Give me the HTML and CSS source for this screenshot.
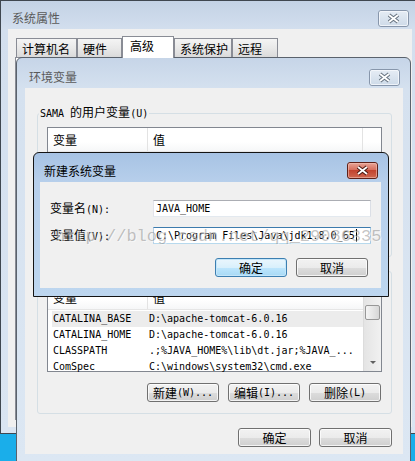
FILE: index.html
```html
<!DOCTYPE html>
<html lang="zh-CN">
<head>
<meta charset="utf-8">
<title>新建系统变量</title>
<link rel="stylesheet" href="styles.css">
</head>
<body>
<div class="desk">

  <section class="win sys">
    <div class="tb">
      <span class="title">系统属性</span>
      <svg class="cls" width="31" height="17" viewBox="0 0 31 17">
        <defs><linearGradient id="gi1" x1="0" y1="0" x2="0" y2="1"><stop offset="0" stop-color="#e6edf5"/><stop offset="1" stop-color="#cddae8"/></linearGradient></defs>
        <rect x=".5" y=".5" width="30" height="16" rx="2.5" fill="url(#gi1)" stroke="#8796ab"/>
        <rect x="1.5" y="1.5" width="28" height="14" rx="1.5" fill="none" stroke="#f6f9fc" stroke-opacity=".8"/>
        <path d="M11 5l9 7M20 5l-9 7" stroke="#66727f" stroke-width="3.8"/>
        <path d="M11 5l9 7M20 5l-9 7" stroke="#fff" stroke-width="1.8"/>
      </svg>
    </div>
    <div class="client sys-client">
      <div class="tabs">
        <div class="tab t1">计算机名</div>
        <div class="tab t2">硬件</div>
        <div class="tab t3 sel">高级</div>
        <div class="tab t4">系统保护</div>
        <div class="tab t5">远程</div>
      </div>
      <div class="panel"></div>
    </div>
  </section>

  <section class="win env">
    <div class="tb">
      <span class="title">环境变量</span>
      <svg class="cls" width="31" height="17" viewBox="0 0 31 17">
        <defs><linearGradient id="gi2" x1="0" y1="0" x2="0" y2="1"><stop offset="0" stop-color="#e6edf5"/><stop offset="1" stop-color="#cddae8"/></linearGradient></defs>
        <rect x=".5" y=".5" width="30" height="16" rx="2.5" fill="url(#gi2)" stroke="#8796ab"/>
        <rect x="1.5" y="1.5" width="28" height="14" rx="1.5" fill="none" stroke="#f6f9fc" stroke-opacity=".8"/>
        <path d="M11 5l9 7M20 5l-9 7" stroke="#66727f" stroke-width="3.8"/>
        <path d="M11 5l9 7M20 5l-9 7" stroke="#fff" stroke-width="1.8"/>
      </svg>
    </div>
    <div class="client env-client">
      <fieldset class="grp">
        <legend><span class="m">SAMA </span>的用户变量<span class="m">(U)</span></legend>
        <div class="lv lv-user">
          <div class="hdr hdr3">
            <div class="hc">变量</div>
            <div class="hc">值</div>
            <div class="hc"></div>
          </div>
        </div>
        <div class="gbtns">
          <div class="btn">新建<span class="m">(N)...</span></div>
          <div class="btn">编辑<span class="m">(E)...</span></div>
          <div class="btn">删除<span class="m">(D)</span></div>
        </div>
      </fieldset>
      <fieldset class="grp grp-sys">
        <legend>系统变量<span class="m">(S)</span></legend>
        <div class="lv lv-sys">
          <div class="lvmain">
            <div class="hdr hdr2">
              <div class="hc">变量</div>
              <div class="hc">值</div>
            </div>
            <div class="rows">
              <div class="row hl m"><span>CATALINA_BASE</span><span>D:\apache-tomcat-6.0.16</span></div>
              <div class="row m"><span>CATALINA_HOME</span><span>D:\apache-tomcat-6.0.16</span></div>
              <div class="row m"><span>CLASSPATH</span><span>.;%JAVA_HOME%\lib\dt.jar;%JAVA_...</span></div>
              <div class="row m"><span>ComSpec</span><span>C:\windows\system32\cmd.exe</span></div>
            </div>
          </div>
          <div class="vsb">
            <div class="arr up"><i></i></div>
            <div class="thumb"></div>
            <div class="track"></div>
            <div class="arr dn"><i></i></div>
          </div>
        </div>
        <div class="gbtns">
          <div class="btn">新建<span class="m">(W)...</span></div>
          <div class="btn">编辑<span class="m">(I)...</span></div>
          <div class="btn">删除<span class="m">(L)</span></div>
        </div>
      </fieldset>
      <div class="dbtns">
        <div class="btn wide">确定</div>
        <div class="btn wide">取消</div>
      </div>
    </div>
  </section>

  <section class="win new">
    <div class="tb">
      <span class="title">新建系统变量</span>
      <svg class="cls" width="31" height="17" viewBox="0 0 31 17">
        <defs><linearGradient id="gr1" x1="0" y1="0" x2="0" y2="1"><stop offset="0" stop-color="#eaa89a"/><stop offset=".45" stop-color="#d7705e"/><stop offset=".5" stop-color="#c2432f"/><stop offset="1" stop-color="#d06a52"/></linearGradient></defs>
        <rect x=".5" y=".5" width="30" height="16" rx="2.5" fill="url(#gr1)" stroke="#5e2119"/>
        <rect x="1.5" y="1.5" width="28" height="14" rx="1.5" fill="none" stroke="#f2c0b4" stroke-opacity=".6"/>
        <path d="M11 5l9 7M20 5l-9 7" stroke="#4a1810" stroke-width="3.8"/>
        <path d="M11 5l9 7M20 5l-9 7" stroke="#fff" stroke-width="1.8"/>
      </svg>
    </div>
    <div class="client nclient">
      <div class="frow">
        <label>变量名<span class="m">(N):</span></label>
        <div class="inp m">JAVA_HOME</div>
      </div>
      <div class="frow">
        <label>变量值<span class="m">(V):</span></label>
        <div class="inp focus m">C:\Program Files\Java\jdk1.8.0_65<span class="caret"></span></div>
      </div>
      <div class="nbtns">
        <div class="btn def">确定</div>
        <div class="btn">取消</div>
      </div>
    </div>
  </section>

  <div class="wm">http://blog.csdn.net/qq_29086335</div>
</div>
</body>
</html>
```

FILE: styles.css
```css
* { box-sizing: border-box; margin: 0; padding: 0; }
html, body { width: 415px; height: 461px; overflow: hidden; }
body {
  background: #1aaeea;
  font-family: "Noto Sans CJK SC", "Liberation Sans", sans-serif;
  font-size: 12px;
  line-height: 12px;
  color: #000;
}
.desk { position: relative; width: 415px; height: 461px; overflow: hidden; }

.m {
  font-family: "DejaVu Sans Mono", "Noto Sans CJK SC", monospace;
  font-size: 10px;
}

/* windows */
.win {
  position: absolute;
  display: flex;
  flex-direction: column;
  border: 1px solid #4d5560;
}
.tb { display: flex; justify-content: space-between; align-items: center; flex: none; }
.title { color: #5a5a5a; white-space: nowrap; }
.cls { display: block; flex: none; }
.client { background: #f0f0f0; flex: 1; display: flex; flex-direction: column; min-height: 0; }

/* system properties (back) */
.sys {
  left: 0; top: 0; width: 421px; height: 434px;
  border-color: #3f4750;
  background: linear-gradient(#c3d2e5, #d3dfee 29px, #dae5f2);
  padding: 0 8px 6px 7px;
}
.sys .tb { height: 28px; padding: 6px 3px 0 4px; }
.tabs { display: flex; align-items: flex-end; height: 21px; margin-top: 7px; padding-left: 8px; }
.tab {
  height: 19px;
  border: 1px solid #898c95;
  border-bottom: 0;
  background: linear-gradient(#f4f4f4, #e9e9e9 50%, #dadada);
  padding: 4px 0 0 5px;
  white-space: nowrap;
}
.t1 { width: 61px; }
.t2 { width: 45px; }
.t3 { width: 52px; }
.t4 { width: 58px; }
.t5 { width: 46px; }
.tab.sel {
  height: 22px;
  background: #fff;
  margin-bottom: -1px;
  padding: 3px 0 0 7px;
  position: relative;
  z-index: 1;
}
.panel { flex: 1; margin: 0 7px 7px 7px; border: 1px solid #898c95; background: #fff; }

/* environment variables (middle) */
.env {
  left: 16px; top: 57px; width: 395px; height: 406px;
  border-color: #5a626c;
  border-radius: 6px 6px 0 0;
  background: linear-gradient(#c6d5e8, #d5e1ef 31px, #dce7f3);
  padding: 0 7px 8px 8px;
}
.env .tb { height: 30px; padding: 8px 3px 0 4px; }
.env-client { padding: 18px 11px 0 12px; }

.grp {
  border: 1px solid #d5dfe5;
  border-radius: 3px;
  padding: 7px 9px 11px 9px;
  min-width: 0;
}
.grp legend { padding: 0 1px; margin-left: -8px; line-height: 12px; font-size: 12px; white-space: nowrap; }
.grp-sys { margin-top: 7px; }

.lv { border: 1px solid #828790; background: #fff; }
.lv-user { height: 88px; }
.lv-sys { height: 87px; display: flex; }
.lvmain { flex: 1; min-width: 0; }
.hdr { display: grid; height: 24px; border-bottom: 1px solid #e6e6e6; background: linear-gradient(#fff, #fff 60%, #f6f7f8); }
.hdr3 { grid-template-columns: 100px 215px 1fr; }
.hdr2 { grid-template-columns: 100px 1fr; }
.hc { display: flex; align-items: center; padding-left: 5px; border-right: 1px solid #e3e3e3; }
.hdr2 .hc:last-child, .hdr3 .hc:last-child { border-right: 0; }

.rows { padding-top: 1px; }
.row { display: grid; grid-template-columns: 96px 1fr; height: 16px; margin-left: 4px; align-items: center; white-space: nowrap; overflow: hidden; }
.row span { padding-left: 1px; }
.row.hl { background: #ececec; }

.vsb {
  width: 18px;
  display: flex;
  flex-direction: column;
  border-left: 1px solid #dcdcdc;
  background: linear-gradient(to right, #e4e4e4, #f1f1f1);
}
.arr { height: 17px; display: flex; align-items: center; justify-content: center; }
.arr i { width: 0; height: 0; border-left: 3px solid transparent; border-right: 3px solid transparent; }
.arr.up i { border-bottom: 3px solid #606060; }
.arr.dn i { border-top: 3px solid #606060; }
.thumb {
  height: 15px;
  margin: 2px 1px 0 1px;
  border: 1px solid #979797;
  border-radius: 2px;
  background: linear-gradient(to right, #f4f4f4, #e6e6e6 50%, #d6d6d6);
}
.track { flex: 1; }

.btn {
  height: 19px;
  width: 72px;
  border: 1px solid #707070;
  border-radius: 3px;
  background: linear-gradient(#f2f2f2, #ebebeb 50%, #dddddd 50%, #cfcfcf);
  box-shadow: inset 0 0 0 1px rgba(255, 255, 255, .75);
  display: flex;
  align-items: center;
  justify-content: center;
  white-space: nowrap;
}
.btn.wide { width: 73px; }
.btn.def {
  border-color: #3c7fb1;
  background: linear-gradient(#eaf6fd, #d9f0fc 50%, #bee6fd 50%, #a7d9f5);
  box-shadow: inset 0 0 0 1px #c4e6fa;
}
.gbtns { display: flex; justify-content: flex-end; gap: 9px; margin-top: 11px; padding-right: 1px; }
.dbtns { display: flex; justify-content: flex-end; gap: 8px; margin-top: 14px; }

/* new system variable (front) */
.new {
  left: 33px; top: 152px; width: 356px; height: 145px;
  border-color: #141414;
  border-radius: 6px 6px 0 0;
  background: linear-gradient(#a7c3e4, #b7cfeb 29px, #bdd6ef);
  padding: 0 7px 8px 6px;
}
.new .tb { height: 29px; padding: 6px 3px 0 4px; }
.new .title { color: #000; }
.nclient { padding: 18px 10px 0 10px; }
.frow { display: flex; align-items: center; height: 17px; }
.frow + .frow { margin-top: 10px; }
.frow label { width: 103px; flex: none; white-space: nowrap; }
.inp {
  flex: 1;
  height: 17px;
  border: 1px solid;
  border-color: #abadb3 #dbdfe6 #e3e9ef #e2e3ea;
  background: #fff;
  padding-left: 2px;
  display: flex;
  align-items: center;
  white-space: nowrap;
}
.inp.focus { border-color: #3d7bad #a4c9e3 #b7d9ed #b5cfe7; }
.caret { display: inline-block; width: 1px; height: 13px; background: #000; margin-left: 1px; }
.nbtns { display: flex; justify-content: flex-end; gap: 9px; margin-top: 14px; padding-right: 3px; }

/* watermark overlay */
.wm {
  position: absolute;
  left: 55px;
  top: 228px;
  font-family: "Liberation Mono", monospace;
  font-size: 17px;
  line-height: 18px;
  color: rgba(115, 115, 115, .42);
  text-shadow: 1px 1px 0 rgba(255, 255, 255, .5);
  white-space: nowrap;
  pointer-events: none;
}
```
